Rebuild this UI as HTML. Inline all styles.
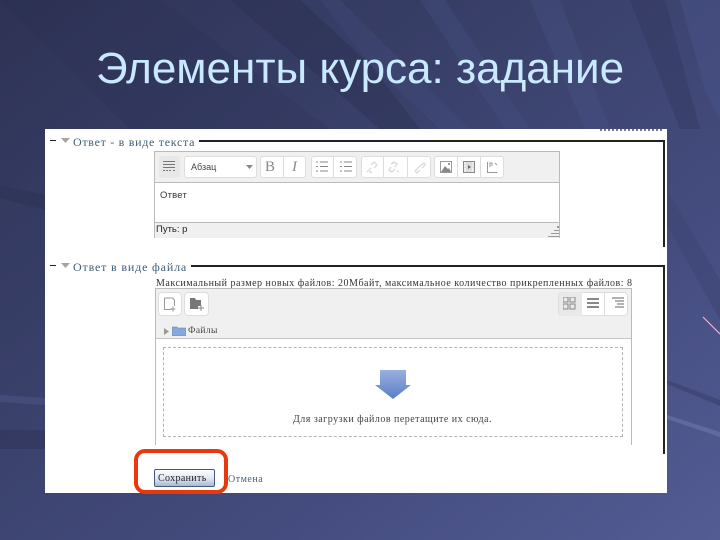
<!DOCTYPE html>
<html><head><meta charset="utf-8"><style>
html,body{margin:0;padding:0}
#p{position:relative;width:720px;height:540px;overflow:hidden;background:#3c4470}
svg.b{position:absolute;left:0;top:0}
.t{position:absolute;white-space:nowrap;font-family:"Liberation Serif",serif;line-height:12px;filter:blur(.25px)}
.a{position:absolute;box-sizing:border-box}
#h{position:absolute;left:96px;top:46px;font:44px/46px "Liberation Sans",sans-serif;color:#c9e9ff;white-space:nowrap}
</style></head><body><div id="p">
<svg class="b" width="720" height="540" viewBox="0 0 720 540">
<defs><linearGradient id="g" x1="0" y1="0" x2="1" y2="1"><stop offset="0" stop-color="#2e3355"/><stop offset=".35" stop-color="#383f68"/><stop offset=".7" stop-color="#454d80"/><stop offset="1" stop-color="#535d94"/></linearGradient></defs>
<rect width="720" height="540" fill="url(#g)"/>
<polygon points="230,0 320,0 420,129 380,129" fill="#2a2f50" opacity=".4"/>
<polygon points="300,0 340,0 470,129 440,129" fill="#454e80" opacity=".3"/>
<polygon points="420,0 445,0 530,129 505,129" fill="#4a5388" opacity=".3"/>
<polygon points="530,0 560,0 610,129 585,129" fill="#4c558c" opacity=".3"/>
<polygon points="630,0 665,0 700,129 680,129" fill="#2f3558" opacity=".35"/>
<polygon points="0,0 160,0 330,129 130,129" fill="#2a2f50" opacity=".2"/>
<polygon points="680,0 720,0 720,120 705,90" fill="#4e5890" opacity=".35"/>
<polygon points="667,190 720,280 720,320 667,225" fill="#3e4675" opacity=".6"/>
<polygon points="667,380 720,400 720,406 667,384" fill="#39406c" opacity=".6"/>
<polygon points="667,415 720,432 720,437 667,419" fill="#7d87b4" opacity=".4"/>
<polygon points="0,185 45,195 45,210 0,198" fill="#2a2f50" opacity=".35"/>
<polygon points="0,395 45,398 45,405 0,402" fill="#4e5788" opacity=".5"/>
<polygon points="0,430 45,430 45,449 0,449" fill="#2c3154" opacity=".45"/>
<line x1="703" y1="317" x2="720" y2="334" stroke="#e8b4cf" stroke-width="1.2"/>
</svg>
<div id="h">Элементы курса: задание</div>

<div class="a" style="left:45px;top:129px;width:622px;height:364px;background:#fff"></div>
<div class="a" style="left:600px;top:129px;width:64px;height:2px;background:repeating-linear-gradient(90deg,#777 0 2px,#fff 2px 4px)"></div>

<!-- fieldset 1 -->
<div class="a" style="left:50px;top:140px;width:6px;height:1px;background:#222"></div>
<svg class="b" style="left:61px;top:138px" width="9" height="6"><polygon points="0,0 9,0 4.500,5" fill="#a4a4a4"/></svg>
<div class="t" style="left:73px;top:136px;font-size:12px;letter-spacing:.7px;color:#3f5f75">Ответ - в виде текста</div>
<div class="a" style="left:199px;top:140px;width:465px;height:1.5px;background:#222"></div>
<div class="a" style="left:663px;top:140px;width:1.5px;height:107px;background:#222"></div>

<!-- editor -->
<div class="a" style="left:154px;top:151px;width:406px;height:87px;background:#fff;border:1px solid #bbb;border-bottom:0"></div>
<div class="a" style="left:155px;top:152px;width:404px;height:31px;background:#f0f0f0;border-bottom:1px solid #bbb"></div>
<div class="a" style="left:155px;top:222px;width:404px;height:16px;background:#f0f0f0;border-top:1px solid #bbb"></div>
<div class="a" style="left:159px;top:156px;width:21px;height:22px;background:#e8e8e8;border-radius:3px"></div>
<svg class="b" style="left:163px;top:161px" width="13" height="12"><path d="M0 .5h12M0 3.500h12M0 6.500h12M0 9.500h2M3 9.500h2M6 9.500h2M10 9.500h2" stroke="#777" fill="none"/></svg>
<div class="a" style="left:184px;top:156px;width:73px;height:22px;background:#fff;border:1px solid #ddd;border-radius:3px"></div>
<div class="t" style="left:191px;top:161px;font:9px/12px 'Liberation Sans',sans-serif;color:#444">Абзац</div>
<svg class="b" style="left:246px;top:165px" width="7" height="4"><polygon points="0,0 7,0 3.500,4" fill="#888"/></svg>
<div class="a" style="left:260px;top:156px;width:46px;height:22px;background:#fff;border:1px solid #ddd;border-radius:3px"></div>
<div class="a" style="left:283px;top:156px;width:1px;height:22px;background:#ddd"></div>
<div class="t" style="left:265px;top:160px;font-size:15px;line-height:15px;color:#888">B</div>
<div class="t" style="left:292px;top:160px;font-size:15px;line-height:15px;font-style:italic;color:#888">I</div>
<div class="a" style="left:311px;top:156px;width:46px;height:22px;background:#fff;border:1px solid #ddd;border-radius:3px"></div>
<div class="a" style="left:333px;top:156px;width:1px;height:22px;background:#ddd"></div>
<svg class="b" style="left:316px;top:161px" width="38" height="12"><path d="M0 1h2M4 1h8M0 5.500h2M4 5.500h8M0 10h2M4 10h8M24 1h2M28 1h8M24 5.500h2M28 5.500h8M24 10h2M28 10h8" stroke="#888" fill="none"/></svg>
<div class="a" style="left:361px;top:156px;width:70px;height:22px;background:#fff;border:1px solid #ddd;border-radius:3px"></div>
<div class="a" style="left:383px;top:156px;width:1px;height:22px;background:#ddd"></div>
<div class="a" style="left:407px;top:156px;width:1px;height:22px;background:#ddd"></div>
<svg class="b" style="left:366px;top:161px" width="60" height="13"><path d="M1 11l4-4M5 4l3-3 3 3-3 3M6 11l-3 0 M25 3l3-2 3 2-2 3M29 8l-3 3-3-2 2-3M27 1v2M24 11l2-1M31 10l2 1M49 10l3-3 3-3 3-2 1 2-3 3M49 10l2 2 3-3" stroke="#dcdcdc" stroke-width="1.400" fill="none"/></svg>
<div class="a" style="left:434px;top:156px;width:70px;height:22px;background:#fff;border:1px solid #ddd;border-radius:3px"></div>
<div class="a" style="left:457px;top:156px;width:1px;height:22px;background:#ddd"></div>
<div class="a" style="left:480px;top:156px;width:1px;height:22px;background:#ddd"></div>
<svg class="b" style="left:440px;top:161px" width="60" height="13"><rect x=".5" y=".5" width="11" height="11" fill="#fff" stroke="#999"/><polygon points="1,11 5,5 8,8 9,7 11,11" fill="#888"/><rect x="8" y="2" width="2" height="2" fill="#999"/><rect x="23.500" y=".5" width="11" height="11" fill="#ddd" stroke="#888"/><path d="M24 2h2M24 5h2M24 8h2M24 10h2M32 2h2M32 5h2M32 8h2M32 10h2" stroke="#fff"/><polygon points="28,4 31,6 28,8" fill="#666"/><path d="M47.500 1v10.500h10M50 6V2h2v3M55 2l2 2" stroke="#999" fill="none"/></svg>
<div class="t" style="left:160px;top:190px;font-family:'Liberation Sans',sans-serif;font-size:9.500px;letter-spacing:.2px;color:#333">Ответ</div>
<div class="t" style="left:156px;top:224px;font:9.500px/12px 'Liberation Sans',sans-serif;color:#222">Путь: p</div>
<svg class="b" style="left:548px;top:226px" width="11" height="12"><path d="M9 0h2v2H9zM6 4h5v1H6zM3 7h8v1H3zM0 10h11v1H0z" fill="#999"/></svg>

<!-- fieldset 2 -->
<div class="a" style="left:50px;top:265px;width:6px;height:1px;background:#222"></div>
<svg class="b" style="left:61px;top:263px" width="9" height="6"><polygon points="0,0 9,0 4.500,5" fill="#a4a4a4"/></svg>
<div class="t" style="left:73px;top:261px;font-size:12px;letter-spacing:.83px;color:#3f5f75">Ответ в виде файла</div>
<div class="a" style="left:191px;top:265px;width:473px;height:1.5px;background:#222"></div>
<div class="a" style="left:663px;top:265px;width:1.5px;height:189px;background:#222"></div>

<div class="t" style="left:156px;top:278px;font-size:10px;letter-spacing:.5px;color:#333">Максимальный размер новых файлов: 20Мбайт, максимальное количество прикрепленных файлов: 8</div>

<!-- file picker -->
<div class="a" style="left:155px;top:288px;width:477px;height:157px;border:1px solid #bbb;border-bottom:0;background:#fff"></div>
<div class="a" style="left:156px;top:289px;width:475px;height:50px;background:#f0f0f0;border-bottom:1px solid #c4c4c4"></div>
<div class="a" style="left:158px;top:292px;width:24px;height:24px;background:#fff;border:1px solid #ddd;border-radius:4px"></div>
<svg class="b" style="left:163px;top:297px" width="15" height="15"><path d="M1.500 1v11.500h7M1.500 1h8l2 2v6" stroke="#999" fill="none"/><path d="M10 9.500v5M7.500 12h5" stroke="#999" fill="none"/></svg>
<div class="a" style="left:184px;top:292px;width:25px;height:24px;background:#fff;border:1px solid #ddd;border-radius:4px"></div>
<svg class="b" style="left:190px;top:297px" width="15" height="15"><path d="M0 1h5l1 2h5v6H8v3H0z" fill="#777"/><path d="M11 8v6M8 11h6" stroke="#888"/></svg>
<svg class="b" style="left:164px;top:328px" width="5" height="7"><polygon points="0,0 5,3.500 0,7" fill="#999"/></svg>
<svg class="b" style="left:172px;top:326px" width="14" height="10"><path d="M0 1h5l1 1h8v8H0z" fill="#86a8da" stroke="#5d7db4" stroke-width=".5"/></svg>
<div class="t" style="left:188px;top:325px;font-size:9.500px;letter-spacing:.35px;color:#444">Файлы</div>
<div class="a" style="left:558px;top:292px;width:70px;height:24px;background:#fff;border:1px solid #ddd;border-radius:4px"></div>
<div class="a" style="left:559px;top:292px;width:23px;height:24px;background:#e9e9e9;border-radius:4px 0 0 4px"></div>
<div class="a" style="left:604px;top:292px;width:1px;height:24px;background:#ddd"></div>
<svg class="b" style="left:563px;top:297px" width="62" height="13"><path d="M0 0h5v5H0zM7 0h5v5H7zM0 7h5v5H0zM7 7h5v5H7z" fill="none" stroke="#888"/><path d="M24 1h12v2H24zM24 5h12v2H24zM24 9h12v2H24z" fill="#888"/><path d="M49 1h12M52 4h9M54 7h7M52 10h9" stroke="#999" stroke-width="1.500"/></svg>
<div class="a" style="left:163px;top:347px;width:460px;height:90px;border:1px dashed #b4b4b4"></div>
<svg class="b" style="left:374px;top:370px" width="38" height="30"><defs><linearGradient id="ar" x1="0" y1="0" x2="0" y2="1"><stop offset="0" stop-color="#98b0de"/><stop offset="1" stop-color="#5a7ec8"/></linearGradient></defs><polygon points="6,0 32,0 32,15 37,15 19,29 1,15 6,15" fill="url(#ar)"/></svg>
<div class="t" style="left:293px;top:414px;font-size:10px;letter-spacing:.48px;color:#444">Для загрузки файлов перетащите их сюда.</div>

<!-- buttons -->
<div class="a" style="left:154px;top:469px;width:61px;height:18px;border:1px solid #45597a;border-radius:2px;background:linear-gradient(#fdfdff,#e0e8f4 50%,#a9bad6)"></div>
<div class="t" style="left:158px;top:473px;font-size:10px;letter-spacing:.35px;color:#222">Сохранить</div>
<div class="t" style="left:228px;top:474px;font-size:10px;letter-spacing:.5px;color:#4a6278">Отмена</div>
<div class="a" style="left:134px;top:449px;width:94px;height:45px;border:4px solid #e8380e;border-radius:11px"></div>
</div></body></html>
